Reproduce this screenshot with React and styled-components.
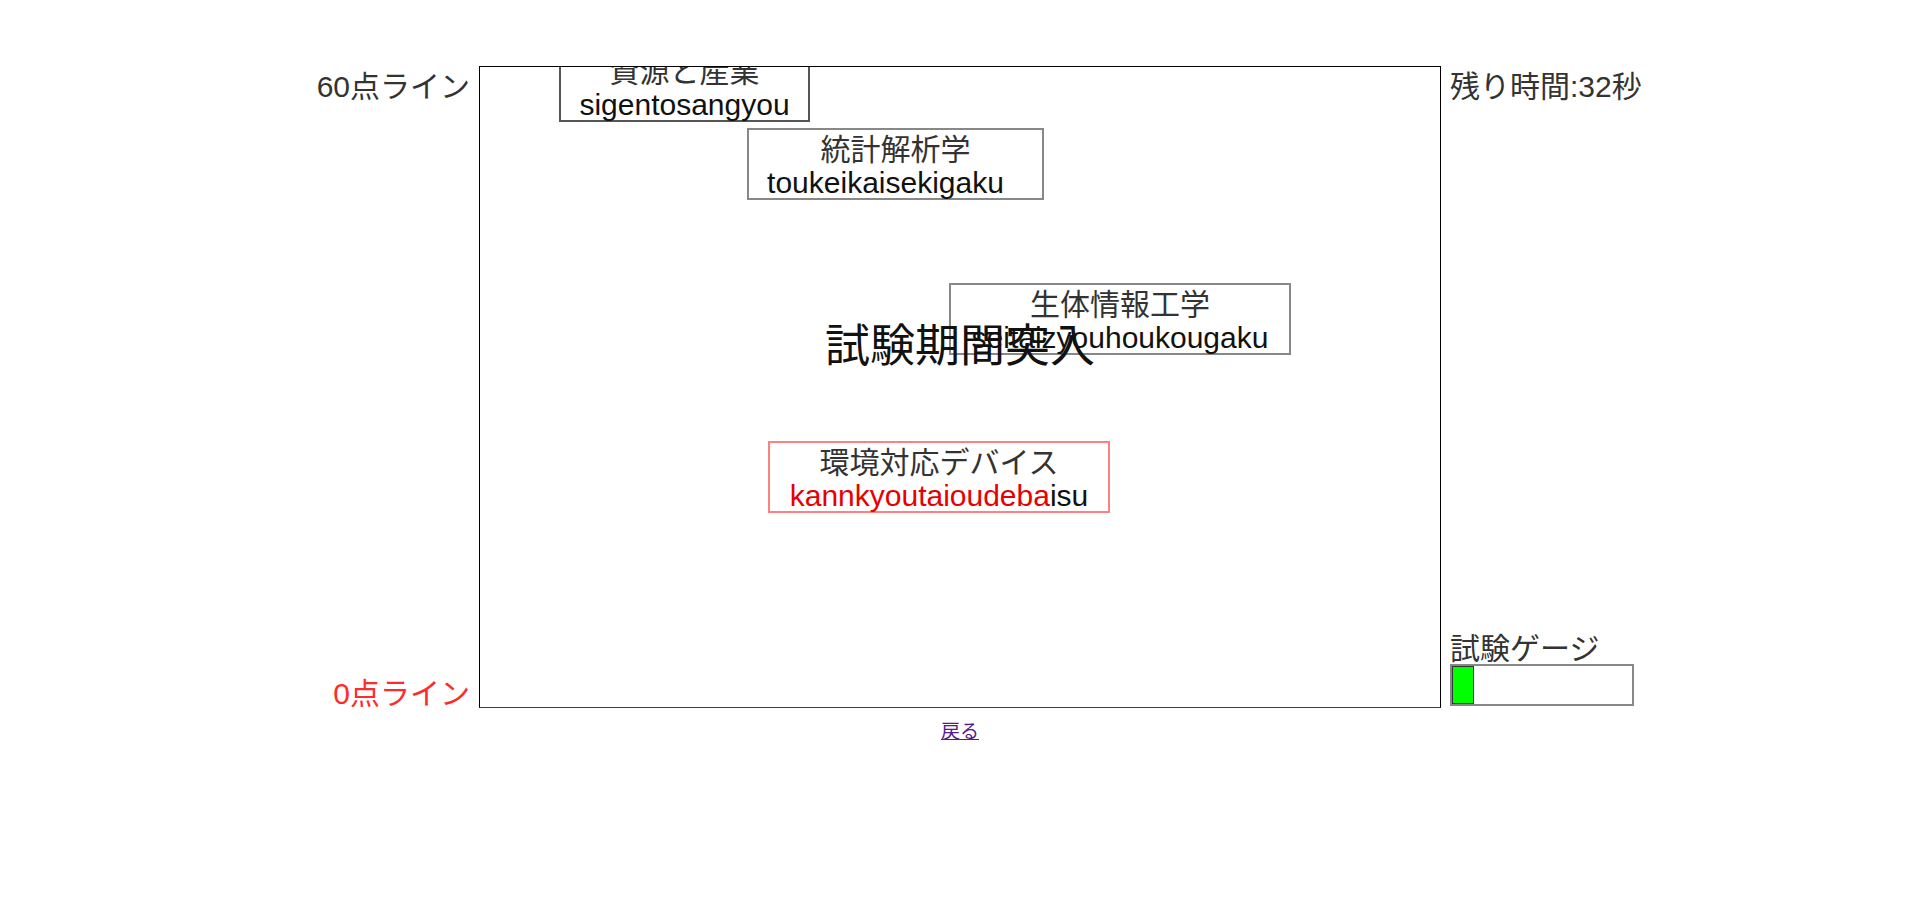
import React from 'react';
import styled, { createGlobalStyle } from 'styled-components';

const words = [
  { kana: '資源と産業', roma: 'sigentosangyou', typed: 0, x: 79, y: -17, w: 251, tone: 'dark' },
  { kana: '統計解析学', roma: 'toukeikaisekigaku', typed: 0, x: 267, y: 61, w: 297, tone: 'grey', shift: 20 },
  { kana: '生体情報工学', roma: 'seitaizyouhoukougaku', typed: 0, x: 469, y: 216, w: 342, tone: 'grey' },
  { kana: '環境対応デバイス', roma: 'kannkyoutaioudebaisu', typed: 17, x: 288, y: 374, w: 342, tone: 'active' },
];

const App = () => {
  const gauge = 12;

  return (
    <>
      <GlobalStyle />
      <Page>
        <Stage>
          <SideLeft>
            <LineLabel>60点ライン</LineLabel>
            <LineLabel $danger>0点ライン</LineLabel>
          </SideLeft>

          <Canvas>
            {words.map((wd) => (
              <Word
                key={wd.roma}
                $tone={wd.tone}
                style={{ left: wd.x, top: wd.y, width: wd.w }}
              >
                <Kana>{wd.kana}</Kana>
                <Roma style={wd.shift ? { paddingRight: wd.shift } : undefined}>
                  <Typed>{wd.roma.slice(0, wd.typed)}</Typed>
                  {wd.roma.slice(wd.typed)}
                </Roma>
              </Word>
            ))}
            <Banner>試験期間突入</Banner>
          </Canvas>

          <SideRight>
            <Timer>残り時間:32秒</Timer>
            <GaugeBlock>
              <GaugeLabel>試験ゲージ</GaugeLabel>
              <GaugeTrack>
                <GaugeFill style={{ width: `${gauge}%` }} />
              </GaugeTrack>
            </GaugeBlock>
          </SideRight>
        </Stage>
        <Back href="#">戻る</Back>
      </Page>
    </>
  );
};

export default App;

const GlobalStyle = createGlobalStyle`
  body {
    margin: 0;
    background: #fff;
    font-family: "Liberation Sans", "Noto Sans CJK JP", sans-serif;
    color: #222;
  }
`;

const Page = styled.div`
  padding-top: 66px;
  display: flex;
  flex-direction: column;
  align-items: center;
`;

const Stage = styled.div`
  width: 100%;
  display: grid;
  grid-template-columns: 1fr 962px 1fr;
  column-gap: 9px;
`;

const SideLeft = styled.div`
  display: flex;
  flex-direction: column;
  justify-content: space-between;
  align-items: flex-end;
`;

const SideRight = styled.div`
  display: flex;
  flex-direction: column;
  justify-content: space-between;
  align-items: flex-start;
`;

const LineLabel = styled.div`
  font-size: 30px;
  line-height: 36px;
  padding-top: ${(p) => (p.$danger ? '0' : '3px')};
  margin-bottom: ${(p) => (p.$danger ? '-4px' : '0')};
  color: ${(p) => (p.$danger ? '#ff2b2b' : '#333')};
`;

const Timer = styled.div`
  font-size: 30px;
  line-height: 36px;
  padding-top: 3px;
  color: #333;
`;

const GaugeBlock = styled.div`
  display: flex;
  flex-direction: column;
  margin-bottom: 2px;
`;

const GaugeLabel = styled.div`
  font-size: 30px;
  line-height: 30px;
  color: #333;
`;

const GaugeTrack = styled.div`
  width: 180px;
  height: 38px;
  border: 2px solid #888;
  background: #fff;
  display: flex;
`;

const GaugeFill = styled.div`
  box-sizing: border-box;
  height: 100%;
  background: #00ff00;
  border: 1px solid #333;
`;

const Canvas = styled.div`
  position: relative;
  width: 960px;
  height: 640px;
  border: 1px solid #000;
  border-bottom-color: #d40000;
  overflow: hidden;
`;

const toneColor = {
  dark: '#555',
  grey: '#888',
  active: '#ff8080',
};

const Word = styled.div`
  position: absolute;
  box-sizing: border-box;
  height: 72px;
  padding-top: 3px;
  border: 2px solid ${(p) => toneColor[p.$tone]};
  text-align: center;
  font-size: 30px;
  line-height: 33px;
  white-space: nowrap;
`;

const Kana = styled.div`
  color: #333;
`;

const Roma = styled.div`
  color: #111;
`;

const Typed = styled.span`
  color: #e60000;
`;

const Banner = styled.div`
  position: absolute;
  left: 0;
  right: 0;
  top: 256px;
  text-align: center;
  font-size: 45px;
  line-height: 48px;
  color: #111;
  pointer-events: none;
`;

const Back = styled.a`
  margin-top: 12px;
  font-size: 19px;
  line-height: 24px;
  color: #551a8b;
`;
